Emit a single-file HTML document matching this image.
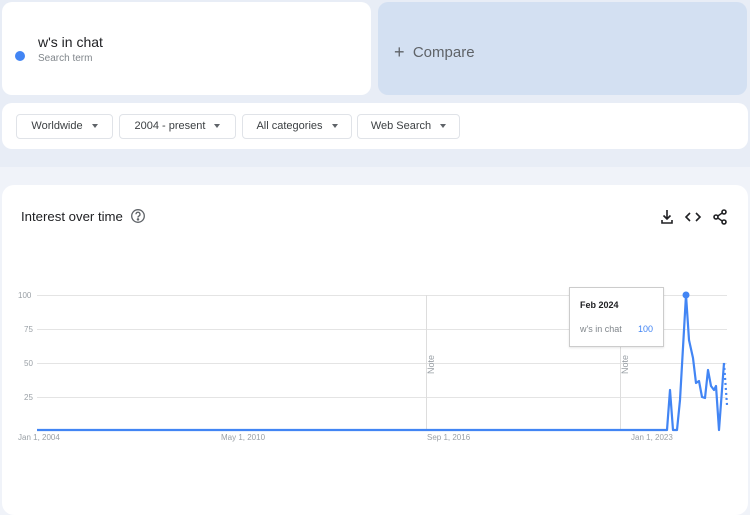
<!DOCTYPE html>
<html><head><meta charset="utf-8"><style>
*{margin:0;padding:0;box-sizing:border-box}
body{width:750px;height:500px;overflow:hidden;background:#f0f3f9;font-family:"Liberation Sans",sans-serif;position:relative}
.band{position:absolute;left:0;top:0;width:750px;height:167px;background:#e8edf6}
.card{position:absolute;background:#fff;border-radius:10px}
.btn{position:absolute;top:114px;height:25px;border:1px solid #e0e3e8;border-radius:4px;background:#fff;font-size:11px;color:#3c4043;line-height:23px;text-align:center}
.btn:after{content:"";display:inline-block;margin-left:9px;border-left:3.5px solid transparent;border-right:3.5px solid transparent;border-top:4.5px solid #5f6368;vertical-align:1px}
.ax{position:absolute;font-size:8px;color:#9aa0a6}
.gl{position:absolute;left:37px;width:690px;height:1px;background:#e4e4e4}
</style></head><body>
<div class="band"></div>
<div class="card" style="left:2px;top:2px;width:369px;height:93px"></div>
<div style="position:absolute;left:15px;top:51px;width:10px;height:10px;border-radius:50%;background:#4285f4"></div>
<div style="position:absolute;left:38px;top:34px;font-size:14px;color:#202124">w's in chat</div>
<div style="position:absolute;left:38px;top:53px;font-size:10px;color:#80868b">Search term</div>
<div style="position:absolute;left:378px;top:2px;width:369px;height:93px;border-radius:10px;background:#d3e0f2"></div>
<div style="position:absolute;left:394px;top:41px;font-size:15px;color:#5f6368;font-weight:300"><span style="font-size:18px;position:relative;top:1px">+</span>&nbsp;&nbsp;Compare</div>
<div class="card" style="left:2px;top:103px;width:746px;height:46px"></div>
<div class="btn" style="left:16px;width:97px">Worldwide</div>
<div class="btn" style="left:119px;width:117px">2004 - present</div>
<div class="btn" style="left:242px;width:110px">All categories</div>
<div class="btn" style="left:357px;width:103px">Web Search</div>
<div class="card" style="left:2px;top:185px;width:746px;height:330px;border-radius:12px"></div>
<div style="position:absolute;left:21px;top:209px;font-size:13.2px;color:#202124">Interest over time</div>
<svg style="position:absolute;left:130px;top:208px" width="16" height="16" viewBox="0 0 16 16" fill="none" stroke="#5f6368" stroke-width="1.3">
<circle cx="8" cy="8" r="6.3"/><path d="M6 6.3a2 2 0 1 1 2.8 1.8C8.2 8.4 8 8.8 8 9.6"/><circle cx="8" cy="11.4" r=".6" fill="#5f6368"/>
</svg>
<svg style="position:absolute;left:658px;top:208px" width="80" height="18" viewBox="0 0 80 18" fill="none" stroke="#202124" stroke-width="1.6">
<path d="M9 2v9M5.5 7.5 9 11l3.5-3.5M4 12v3h10v-3"/>
<path d="M32 5l-4 4 4 4M38 5l4 4-4 4"/>
<circle cx="58" cy="9" r="2" fill="#fff"/><circle cx="66" cy="4" r="2" fill="#fff"/><circle cx="66" cy="14" r="2" fill="#fff"/><path d="M59.8 8 64.2 5M59.8 10l4.4 3" stroke-width="1.4"/>
</svg>
<div class="gl" style="top:295px"></div><div class="gl" style="top:329px"></div><div class="gl" style="top:363px"></div><div class="gl" style="top:397px"></div>
<div class="ax" style="left:18px;top:291px">100</div><div class="ax" style="left:24px;top:325px">75</div><div class="ax" style="left:24px;top:359px">50</div><div class="ax" style="left:24px;top:393px">25</div>
<div style="position:absolute;left:426px;top:295px;width:1px;height:135px;background:#ddd"></div>
<div style="position:absolute;left:620px;top:295px;width:1px;height:135px;background:#ddd"></div>
<div style="position:absolute;font-size:9px;color:#9aa0a6;transform:rotate(-90deg);transform-origin:0 0;left:426px;top:374px">Note</div>
<div style="position:absolute;left:620px;top:374px;font-size:9px;color:#9aa0a6;transform:rotate(-90deg);transform-origin:0 0">Note</div>
<div class="ax" style="left:18px;top:433px">Jan 1, 2004</div>
<div class="ax" style="left:221px;top:433px">May 1, 2010</div>
<div class="ax" style="left:427px;top:433px">Sep 1, 2016</div>
<div class="ax" style="left:631px;top:433px">Jan 1, 2023</div>
<svg style="position:absolute;left:0;top:0" width="750" height="500">
<polyline fill="none" stroke="#4285f4" stroke-width="2.2" stroke-linejoin="round" points="37,430 667,430 670,390 673,430 677,430 680,400 686,295 689,340 693,358 696,383 699,381 702,397 705,398 708,370 711,386 714,390 716,386 719,430 724,363"/>
<polyline fill="none" stroke="#4285f4" stroke-width="2.2" stroke-dasharray="2,3" points="724,363 727,405"/>
<circle cx="686" cy="295" r="3.5" fill="#4285f4"/>
</svg>
<div style="position:absolute;left:569px;top:287px;width:95px;height:60px;background:#fff;border:1px solid #ccc;box-shadow:0 1px 2px rgba(0,0,0,.1)"></div>
<div style="position:absolute;left:580px;top:300px;font-size:9px;font-weight:bold;color:#202124">Feb 2024</div>
<div style="position:absolute;left:580px;top:324px;font-size:9px;color:#80868b">w's in chat</div>
<div style="position:absolute;left:638px;top:324px;font-size:9px;color:#4285f4">100</div>
</body></html>
